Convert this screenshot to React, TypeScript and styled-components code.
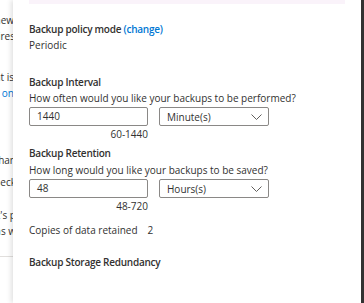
import styled, { createGlobalStyle } from "styled-components";

const Global = createGlobalStyle`
  html, body {
    margin: 0;
    padding: 0;
    background: #ffffff;
  }
  body {
    font-family: "Open Sans", "Noto Sans", sans-serif;
    font-size: 10px;
    color: #323130;
  }
`;

const Screen = styled.div`
  display: flex;
  height: 303px;
  width: 364px;
  overflow: hidden;
  background: #ffffff;
`;

const Backdrop = styled.div`
  width: 13px;
  flex: none;
  overflow: hidden;
  display: flex;
  flex-direction: column;
  align-items: flex-end;
  padding-top: 12px;
`;

const BackLine = styled.div<{ $gap?: number; $link?: boolean; $clip?: number }>`
  white-space: nowrap;
  line-height: 16px;
  margin-top: ${(p) => p.$gap ?? 0}px;
  margin-right: ${(p) => -(p.$clip ?? 0)}px;
  color: ${(p) => (p.$link ? "#0078d4" : "#323130")};
`;

const BackRule = styled.div`
  align-self: stretch;
  width: 40px;
  height: 1px;
  margin-top: 17px;
  background: #e1dfdd;
`;

const Panel = styled.div`
  flex: 1;
  position: relative;
  z-index: 1;
  background: #ffffff;
  box-shadow: -2px 0 5px rgba(0, 0, 0, 0.12);
  padding: 0 16px;
  display: flex;
  flex-direction: column;
`;

const Notice = styled.div`
  height: 4px;
  background: #faf3fa;
  margin-bottom: 17px;
`;

const Title = styled.div<{ $gap?: number }>`
  font-weight: 600;
  letter-spacing: -0.25px;
  line-height: 16px;
  margin-top: ${(p) => p.$gap ?? 0}px;
`;

const Change = styled.span`
  color: #0078d4;
`;

const Text = styled.div<{ $gap?: number }>`
  line-height: 16px;
  margin-top: ${(p) => p.$gap ?? 0}px;
`;

const FieldRow = styled.div`
  display: flex;
  gap: 11px;
  margin-top: 1px;
`;

const NumberBox = styled.div`
  display: flex;
  flex-direction: column;
  width: 119px;
`;

const Input = styled.div`
  box-sizing: border-box;
  height: 19px;
  border: 1px solid #8a8886;
  border-radius: 2px;
  padding: 0 7px;
  line-height: 17px;
`;

const Range = styled.div`
  text-align: right;
  line-height: 16px;
`;

const Select = styled.div`
  box-sizing: border-box;
  width: 110px;
  height: 19px;
  border: 1px solid #8a8886;
  border-radius: 2px;
  padding: 0 6px 0 7px;
  display: flex;
  align-items: center;
  justify-content: space-between;
`;

const Copies = styled.div`
  display: flex;
  gap: 10px;
  line-height: 16px;
  margin-top: 8px;
`;

const Rail = styled.div`
  width: 3px;
  flex: none;
  background: #333333;
`;

const Chevron = () => (
  <svg width="11" height="6" viewBox="0 0 11 6">
    <path d="M0.5 0.5 L5.5 5.5 L10.5 0.5" fill="none" stroke="#605e5c" strokeWidth="1" />
  </svg>
);

const Field = ({ value, unit, range }: { value: string; unit: string; range: string }) => (
  <FieldRow>
    <NumberBox>
      <Input>{value}</Input>
      <Range>{range}</Range>
    </NumberBox>
    <Select>
      <span>{unit}</span>
      <Chevron />
    </Select>
  </FieldRow>
);

export default function App() {
  return (
    <>
      <Global />
      <Screen>
        <Backdrop>
          <BackLine $clip={1}>new</BackLine>
          <BackLine $clip={2}>requires</BackLine>
          <BackLine $gap={25} $clip={1}>that is</BackLine>
          <BackLine $link $clip={1}>Learn more on</BackLine>
          <BackLine $gap={51} $clip={3}>other than</BackLine>
          <BackLine $gap={6} $clip={3}>check</BackLine>
          <BackLine $gap={17} $clip={3}>that's p</BackLine>
          <BackLine $clip={3}>has w</BackLine>
          <BackRule />
        </Backdrop>
        <Panel>
          <Notice />
          <Title>
            Backup policy mode <Change>(change)</Change>
          </Title>
          <Text>Periodic</Text>

          <Title $gap={21}>Backup Interval</Title>
          <Text>How often would you like your backups to be performed?</Text>
          <Field value="1440" unit="Minute(s)" range="60-1440" />

          <Title $gap={3}>Backup Retention</Title>
          <Text $gap={1}>How long would you like your backups to be saved?</Text>
          <Field value="48" unit="Hours(s)" range="48-720" />

          <Copies>
            <span>Copies of data retained</span>
            <span>2</span>
          </Copies>

          <Title $gap={16}>Backup Storage Redundancy</Title>
        </Panel>
        <Rail />
      </Screen>
    </>
  );
}
